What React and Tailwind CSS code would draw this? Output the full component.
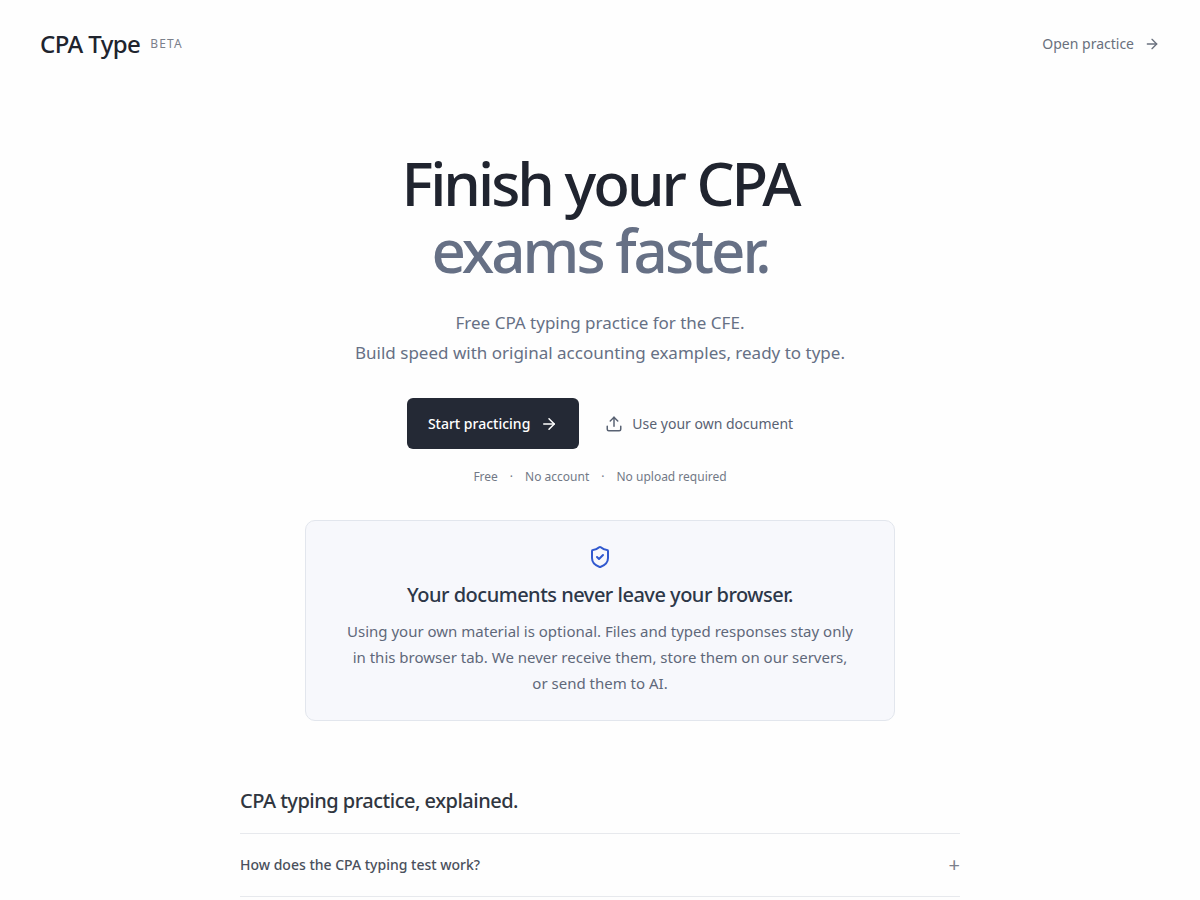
import { useState } from "react";
import { ArrowRight, ShieldCheck, Upload } from "lucide-react";

const faqs = [
  {
    question: "How does the CPA typing test work?",
    answer:
      "Pick an example, type it out, and see your speed and accuracy as you go.",
  },
];

function Header() {
  return (
    <header className="flex items-center justify-between px-10 pt-6">
      <a href="#" className="flex items-center gap-2.5 text-[#20242e]">
        <span className="text-2xl leading-10 font-medium tracking-tight">
          CPA Type
        </span>
        <span className="text-xs tracking-widest text-[#7b808b]">BETA</span>
      </a>
      <a
        href="#practice"
        className="flex items-center gap-2.5 text-sm text-[#69707d] hover:text-[#20242e]"
      >
        Open practice <ArrowRight size={16} />
      </a>
    </header>
  );
}

function Hero() {
  return (
    <section className="flex flex-col items-center text-center">
      <h1 className="text-[60px] leading-[67px] font-medium tracking-tighter text-[#20242f]">
        Finish your CPA
        <span className="block text-[#667085]">exams faster.</span>
      </h1>

      <p className="mt-6 text-[17px] leading-[30px] text-[#667085]">
        Free CPA typing practice for the CFE.
        <br />
        Build speed with original accounting examples, ready to type.
      </p>

      <div className="mt-[30px] flex flex-wrap items-center justify-center gap-[26px]">
        <button
          type="button"
          className="flex h-[51px] items-center gap-2.5 rounded-md bg-[#242935] px-[21px] text-sm font-medium text-white hover:bg-[#303746]"
        >
          Start practicing <ArrowRight size={18} />
        </button>
        <button
          type="button"
          className="flex items-center gap-[9px] text-sm text-[#596273] hover:text-[#20242e]"
        >
          <Upload size={18} /> Use your own document
        </button>
      </div>

      <ul className="mt-5 flex items-center gap-3 text-xs leading-4 text-[#727986]">
        <li>Free</li>
        <li aria-hidden="true">·</li>
        <li>No account</li>
        <li aria-hidden="true">·</li>
        <li>No upload required</li>
      </ul>
    </section>
  );
}

function PrivacyCard() {
  return (
    <section className="mx-auto mt-[35px] flex w-full max-w-[590px] flex-col items-center rounded-[10px] border border-[#e2e6ed] bg-[#f7f8fc] px-10 py-6 text-center">
      <ShieldCheck size={24} className="text-[#3159cf]" />
      <h2 className="mt-3 text-xl leading-7 font-medium tracking-tight text-[#2d3748]">
        Your documents never leave your browser.
      </h2>
      <p className="mt-[9px] text-[15px] leading-[26px] text-[#5f687a]">
        Using your own material is optional. Files and typed responses stay only
        in this browser tab. We never receive them, store them on our servers,
        or send them to AI.
      </p>
    </section>
  );
}

function FaqItem({ question, answer }) {
  const [open, setOpen] = useState(false);

  return (
    <div className="border-b border-[#e7e9ed]">
      <button
        type="button"
        aria-expanded={open}
        onClick={() => setOpen(!open)}
        className="flex w-full items-center justify-between py-[18px] text-left text-sm font-medium text-[#4a505c]"
      >
        {question}
        <span className="text-xl leading-[26px] font-normal text-[#7b808b]">
          {open ? "−" : "+"}
        </span>
      </button>
      {open && <p className="pb-5 text-sm text-[#667085]">{answer}</p>}
    </div>
  );
}

function Faq() {
  return (
    <section className="mx-auto mt-[66px] w-full max-w-[720px] pb-1">
      <h2 className="border-b border-[#e7e9ed] pb-[18px] text-xl leading-7 font-medium tracking-tight text-[#303640]">
        CPA typing practice, explained.
      </h2>
      {faqs.map((faq) => (
        <FaqItem key={faq.question} {...faq} />
      ))}
    </section>
  );
}

export default function App() {
  return (
    <div className="min-h-screen bg-[#fefefe] font-['Noto_Sans',sans-serif]">
      <Header />
      <main className="px-5 pt-[86px]">
        <Hero />
        <PrivacyCard />
        <Faq />
      </main>
    </div>
  );
}
